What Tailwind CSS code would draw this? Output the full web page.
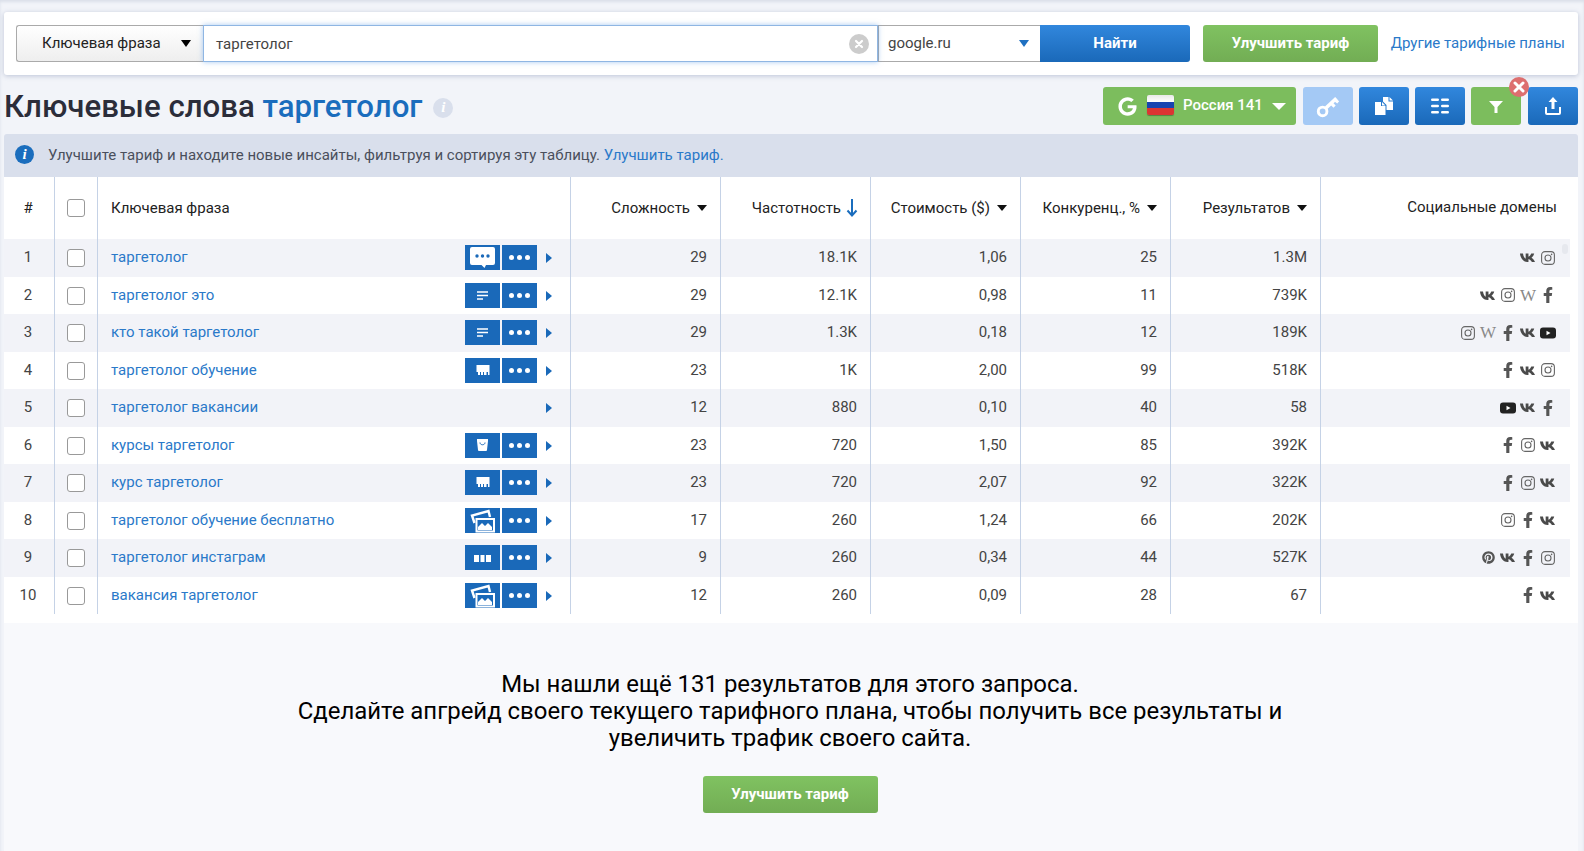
<!DOCTYPE html>
<html lang="ru">
<head>
<meta charset="utf-8">
<title>Ключевые слова</title>
<script src="https://cdn.jsdelivr.net/npm/@tailwindcss/browser@4"></script>
</head>
<body class="h-[851px] overflow-hidden bg-[#f2f4f9] shadow-[inset_0_2px_3px_rgba(90,105,150,0.15)] font-['Roboto',sans-serif] text-[15px] text-[#444]">

<!-- shared icons -->
<svg class="hidden">
  <symbol id="vk" viewBox="0 0 24 14"><path fill="#4a4a4a" d="M0 1h4.500c.5 4 2 6.800 4 7.800V1h4.200v5c2-.8 3.300-3 4.200-5h4.400c-.7 3-2.500 5-4 6.300 2 1.400 4.200 3.700 5.200 6.500h-4.700c-1-2.300-2.900-4-5.100-4.700v4.700h-1.700C6 13.800.5 8.500 0 1z"/></symbol>
  <symbol id="fb" viewBox="0 0 320 512"><path fill="#555" d="M279.140 288l14.220-92.660h-88.910v-60.130c0-25.350 12.420-50.060 52.240-50.060h40.420V6.260S260.430 0 225.360 0c-73.220 0-121.080 44.380-121.080 124.720v70.620H22.890V288h81.390v224h100.170V288z"/></symbol>
  <symbol id="ig" viewBox="0 0 14 14"><rect x=".6" y=".6" width="12.800" height="12.800" rx="3.400" fill="none" stroke="#666" stroke-width="1.100"/><circle cx="7" cy="7" r="3" fill="none" stroke="#666" stroke-width="1.100"/><circle cx="10.600" cy="3.400" r=".8" fill="#666"/></symbol>
  <symbol id="yt" viewBox="0 0 16 12"><rect width="16" height="11" y=".5" rx="3" fill="#222"/><path fill="#fff" d="M6.500 3.800l4 2.200-4 2.200z"/></symbol>
  <symbol id="pin" viewBox="0 0 496 512"><path fill="#555" d="M496 256c0 137-111 248-248 248-25.600 0-50.200-3.900-73.400-11.100 10.100-16.500 25.200-43.500 30.800-65 3-11.600 15.400-59 15.400-59 8.100 15.400 31.700 28.500 56.800 28.500 74.800 0 128.700-68.800 128.700-154.300 0-81.900-66.900-143.200-152.900-143.200-107 0-163.900 71.800-163.900 150.100 0 36.400 19.400 81.700 50.300 96.100 4.700 2.200 7.200 1.200 8.300-3.300.8-3.400 5-20.300 6.900-28.100.6-2.500.3-4.700-1.700-7.100-10.100-12.500-18.300-35.300-18.300-56.600 0-54.700 41.400-107.600 112-107.600 60.900 0 103.600 41.500 103.600 100.900 0 67.100-33.900 113.600-78 113.600-24.300 0-42.600-20.100-36.700-44.800 7-29.500 20.500-61.300 20.500-82.600 0-19-10.200-34.900-31.400-34.900-24.900 0-44.900 25.700-44.900 60.200 0 22 7.400 36.800 7.400 36.800s-24.500 103.800-29 123.200c-5 21.400-3 51.600-.9 71.200C65.400 450.900 0 361.100 0 256 0 119 111 8 248 8s248 111 248 248z"/></symbol>
</svg>

<div class="flex flex-col h-full pl-1 pr-[6px] pt-3">

  <!-- search bar -->
  <div class="flex items-center h-[63px] shrink-0 pl-3 pr-[13px] bg-white rounded-[3px] shadow-[0_1px_5px_rgba(90,105,150,0.35)]">
    <div class="flex items-center justify-between w-[187px] h-[37px] pl-[25px] pr-3 border border-[#aaa] border-r-0 rounded-l-[3px] bg-gradient-to-b from-white to-[#eee] text-[#222]">
      Ключевая фраза
      <span class="w-0 h-0 border-x-[5.500px] border-x-transparent border-t-[7px] border-t-black"></span>
    </div>
    <div class="flex items-center justify-between w-[675px] h-[37px] pl-3 pr-[8px] border border-[#8fb6e3] bg-white shadow-[0_0_5px_rgba(80,150,230,0.5)] text-[#444] relative">
      <span class="pt-[1px]">таргетолог</span>
      <span class="flex items-center justify-center w-5 h-5 rounded-full bg-[#ccc]">
        <svg viewBox="0 0 10 10" class="w-[10px] h-[10px]"><path d="M2 2l6 6M8 2l-6 6" stroke="#fff" stroke-width="2.200" stroke-linecap="round"/></svg>
      </span>
    </div>
    <div class="flex items-center justify-between w-[162px] h-[37px] pl-[9px] pr-[11px] border-y border-[#aaa] border-l border-l-[#aaa] bg-white text-[#444]">
      google.ru
      <span class="w-0 h-0 border-x-[5.500px] border-x-transparent border-t-[7px] border-t-[#1f70c1]"></span>
    </div>
    <div class="flex items-center justify-center w-[150px] h-[37px] rounded-r-[3px] bg-gradient-to-b from-[#3187dd] to-[#1a69b9] text-white font-bold">Найти</div>
    <div class="flex items-center justify-center w-[175px] h-[37px] ml-[13px] rounded-[3px] bg-gradient-to-b from-[#80c261] to-[#72ad54] text-white font-bold">Улучшить тариф</div>
    <a class="ml-auto text-[#2a79c9]">Другие тарифные планы</a>
  </div>

  <!-- title and tools -->
  <div class="flex items-center h-[38px] mt-3 shrink-0">
    <h1 class="pt-[1px] text-[31.200px] leading-[38px] font-medium text-[#2b2d3a]">Ключевые слова <span class="text-[#1a6dbd]">таргетолог</span></h1>
    <span class="flex items-center justify-center w-5 h-5 ml-[11px] mt-[3px] rounded-full bg-[#d9dfec] text-white text-[15px] font-bold italic font-['Liberation_Serif',serif]">i</span>

    <div class="flex items-center h-[38px] ml-auto w-[193px] pl-[15px] rounded-[3px] bg-[#7cbd5d] text-white font-medium">
      <svg viewBox="0 0 488 512" class="w-[19px] h-[19px] mr-[10px]"><path fill="#fff" d="M488 261.800C488 403.300 391.100 504 248 504 110.800 504 0 393.200 0 256S110.800 8 248 8c66.800 0 123 24.500 166.300 64.900l-67.500 64.900C258.500 52.600 94.300 116.600 94.300 256c0 86.500 69.100 156.600 153.700 156.600 98.200 0 135-70.400 140.800-106.900H248v-85.300h236.100c2.300 12.700 3.900 24.900 3.900 41.400z"/></svg>
      <span class="flex flex-col w-[27px] h-5 mb-[2px] rounded-[2px] overflow-hidden mr-[9px] shadow-[0_1px_1px_rgba(0,0,0,0.3)]">
        <span class="h-[7px] bg-gradient-to-b from-[#e9e9e9] to-white"></span>
        <span class="h-[6px] bg-[#1744b0]"></span>
        <span class="h-[7px] bg-[#dc3532]"></span>
      </span>
      <span class="pb-[2px]">Россия 141</span>
      <span class="ml-[9px] w-0 h-0 border-x-[7px] border-x-transparent border-t-[7px] border-t-white"></span>
    </div>

    <div class="flex items-center justify-center w-[50px] h-[38px] ml-[7px] rounded-[3px] bg-[#a4c9f5]">
      <svg viewBox="0 0 20 20" class="w-[24px] h-[24px]"><circle cx="5.500" cy="14.500" r="3.600" fill="none" stroke="#fff" stroke-width="2.400"/><path d="M8.500 11.500L17 3.500" stroke="#fff" stroke-width="3"/><path d="M13 8l2.500 2.500M16 5l2.500 2" stroke="#fff" stroke-width="2.600"/></svg>
    </div>
    <div class="flex items-center justify-center w-[50px] h-[38px] ml-[6px] rounded-[3px] bg-gradient-to-b from-[#3187dd] to-[#1a69b9]">
      <svg viewBox="0 0 20 20" class="w-5 h-5"><path fill="#fff" d="M1 6h6v4h4.500v9H1zM8 6l3.500 3.500H8z"/><path fill="#fff" d="M9 1h5.500v4.500H19V14h-6.500V9L9 5.500zM15.500 1L19 4.500h-3.500z"/></svg>
    </div>
    <div class="flex items-center justify-center w-[50px] h-[38px] ml-[6px] rounded-[3px] bg-gradient-to-b from-[#3187dd] to-[#1a69b9]">
      <svg viewBox="0 0 18 16" class="w-[18px] h-4"><path stroke="#fff" stroke-width="2.400" stroke-linecap="round" d="M1.200 1.800h5.600M11.200 1.800h5.600M1.200 8h5.600M11.200 8h5.600M1.200 14.200h5.600M11.200 14.200h5.600"/></svg>
    </div>
    <div class="relative flex items-center justify-center w-[50px] h-[38px] ml-[6px] rounded-[3px] bg-[#7cbd5d]">
      <svg viewBox="0 0 14 12" class="w-[14px] h-3 mt-[1px]"><path fill="#fff" d="M0 0h14L8.500 6v6h-3V6z"/></svg>
      <span class="absolute -top-[10px] right-[-8px] flex items-center justify-center w-5 h-5 rounded-full bg-[#dd6f6f]">
        <svg viewBox="0 0 12 12" class="w-3 h-3"><path d="M2 2l8 8M10 2l-8 8" stroke="#fff" stroke-width="3" stroke-linecap="round"/></svg>
      </span>
    </div>
    <div class="flex items-center justify-center w-[50px] h-[38px] ml-[7px] rounded-[3px] bg-gradient-to-b from-[#3187dd] to-[#1a69b9]">
      <svg viewBox="0 0 16 18" class="w-4 h-[18px]"><path fill="#fff" d="M8 0l4.500 5H9.500v7h-3V5H3.500z"/><path fill="none" stroke="#fff" stroke-width="2" d="M1 10v6a1 1 0 0 0 1 1h12a1 1 0 0 0 1-1v-6"/></svg>
    </div>
  </div>

  <!-- notice -->
  <div class="flex items-center h-[43px] mt-[9px] shrink-0 pl-[11px] rounded-t-[3px] bg-[#d9dfec] text-[#4a4f5c]">
    <span class="flex items-center justify-center w-[19px] h-[19px] mb-[2px] mr-[14px] rounded-full bg-[#1a6dbd] text-white text-[15px] font-bold italic font-['Liberation_Serif',serif]">i</span>
    <span>Улучшите тариф и находите новые инсайты, фильтруя и сортируя эту таблицу. <a class="text-[#2a79c9]">Улучшить тариф.</a></span>
  </div>

  <!-- table -->
  <div class="relative shrink-0 pb-[9px] bg-white">
    <div class="w-[1566px]">
      <div class="grid grid-cols-[51px_43px_473px_150px_150px_150px_150px_150px_249px] h-[62px] text-[#222]">
        <div class="flex items-center justify-center pr-[2px] border-r border-[#c5d2e6]">#</div>
        <div class="flex items-center justify-center border-r border-[#c5d2e6]">
          <span class="w-[18px] h-[18px] rounded-[3px] border border-[#999] bg-white"></span>
        </div>
        <div class="flex items-center pl-[13px] border-r border-[#c5d2e6]">Ключевая фраза</div>
        <div class="flex items-center justify-end gap-[7px] pr-[13px] border-r border-[#c5d2e6]">Сложность <span class="w-0 h-0 border-x-[5px] border-x-transparent border-t-[6px] border-t-[#111]"></span></div>
        <div class="flex items-center justify-end gap-[5px] pr-[12px] border-r border-[#c5d2e6]">Частотность
          <svg viewBox="0 0 12 18" class="w-3 h-[18px]"><path d="M6 0v16M1.500 11.500L6 16.500l4.500-5" fill="none" stroke="#1a6dbd" stroke-width="2"/></svg>
        </div>
        <div class="flex items-center justify-end gap-[7px] pr-[13px] border-r border-[#c5d2e6]">Стоимость ($) <span class="w-0 h-0 border-x-[5px] border-x-transparent border-t-[6px] border-t-[#111]"></span></div>
        <div class="flex items-center justify-end gap-[7px] pr-[13px] border-r border-[#c5d2e6]">Конкуренц., % <span class="w-0 h-0 border-x-[5px] border-x-transparent border-t-[6px] border-t-[#111]"></span></div>
        <div class="flex items-center justify-end gap-[7px] pr-[13px] border-r border-[#c5d2e6]">Результатов <span class="w-0 h-0 border-x-[5px] border-x-transparent border-t-[6px] border-t-[#111]"></span></div>
        <div class="flex items-center justify-end pr-[13px] pb-[2px]">Социальные домены</div>
      </div>
      <div id="rows"></div>
    </div>
    <span class="absolute right-[10px] top-[67px] w-[6px] h-[10px] rounded-[3px] bg-[#e6e8ee]"></span>
  </div>

  <!-- upgrade block -->
  <div class="flex flex-col items-center flex-1 pt-[48px] pr-[2px] bg-[#f8f9fc]">
    <p class="w-[1000px] text-center text-[23.950px] leading-[27px] text-black">Мы нашли ещё 131 результатов для этого запроса.<br>Сделайте апгрейд своего текущего тарифного плана, чтобы получить все результаты и увеличить трафик своего сайта.</p>
    <div class="flex items-center justify-center w-[175px] h-[37px] mt-[24px] rounded-[3px] bg-gradient-to-b from-[#80c261] to-[#72ad54] text-white font-bold">Улучшить тариф</div>
  </div>
</div>

<script>
const rows = [
  ['таргетолог', 'chat', '29', '18.1K', '1,06', '25', '1.3M', ['vk', 'ig']],
  ['таргетолог это', 'list', '29', '12.1K', '0,98', '11', '739K', ['vk', 'ig', 'w', 'fb']],
  ['кто такой таргетолог', 'list', '29', '1.3K', '0,18', '12', '189K', ['ig', 'w', 'fb', 'vk', 'yt']],
  ['таргетолог обучение', 'shop', '23', '1K', '2,00', '99', '518K', ['fb', 'vk', 'ig']],
  ['таргетолог вакансии', '', '12', '880', '0,10', '40', '58', ['yt', 'vk', 'fb']],
  ['курсы таргетолог', 'bag', '23', '720', '1,50', '85', '392K', ['fb', 'ig', 'vk']],
  ['курс таргетолог', 'shop', '23', '720', '2,07', '92', '322K', ['fb', 'ig', 'vk']],
  ['таргетолог обучение бесплатно', 'img', '17', '260', '1,24', '66', '202K', ['ig', 'fb', 'vk']],
  ['таргетолог инстаграм', 'cols', '9', '260', '0,34', '44', '527K', ['pin', 'vk', 'fb', 'ig']],
  ['вакансия таргетолог', 'img', '12', '260', '0,09', '28', '67', ['fb', 'vk']]
];

const featureIcons = {
  chat: '<svg viewBox="0 0 35 25" class="w-[35px] h-[25px]"><path fill="#fff" d="M7 2h21a2 2 0 0 1 2 2v14a2 2 0 0 1-2 2h-7l-1.500 3-3-3H7a2 2 0 0 1-2-2V4a2 2 0 0 1 2-2z"/><circle cx="12" cy="11" r="1.700" fill="#1a69b9"/><circle cx="17.500" cy="11" r="1.700" fill="#1a69b9"/><circle cx="23" cy="11" r="1.700" fill="#1a69b9"/></svg>',
  list: '<svg viewBox="0 0 35 25" class="w-[35px] h-[25px]"><path stroke="#fff" stroke-width="1.500" d="M12 9h11M12 12.500h11M12 16h6"/></svg>',
  shop: '<svg viewBox="0 0 35 25" class="w-[35px] h-[25px]"><path fill="#fff" d="M11.500 7h13v10h-1.500v-3h-1.500v3H19v-3h-1v3h-2v-3h-1v3h-2v-3h-1.500z"/></svg>',
  bag: '<svg viewBox="0 0 35 25" class="w-[35px] h-[25px]"><path fill="#fff" d="M12 6h11v2l-1 9a1 1 0 0 1-1 1h-7a1 1 0 0 1-1-1l-1-9z"/><path fill="none" stroke="#1a69b9" d="M15 9.500c0 3 5 3 5 0"/></svg>',
  img: '<svg viewBox="0 0 35 25" class="w-[35px] h-[25px]"><path fill="none" stroke="#fff" stroke-width="2.400" d="M9.500 15L7 7.500 23.500 3 25 9"/><rect x="11.500" y="11" width="17.500" height="12.500" fill="#1a69b9" stroke="#fff" stroke-width="2"/><path fill="#fff" d="M13 22v-3l4-4 3 3 3-3 4 4v3z"/></svg>',
  cols: '<svg viewBox="0 0 35 25" class="w-[35px] h-[25px]"><path fill="#fff" d="M9 10h5v7H9zM15.500 10h4v7h-4zM21 10h5v7h-5z"/></svg>'
};

function social(name) {
  if (name === 'w') return '<span class="flex items-center justify-center w-5 text-[17px] text-[#888] font-[\'Liberation_Serif\',serif]">W</span>';
  const size = { vk: 'w-[16px] h-[11px]', fb: 'w-[10px] h-[16px]', ig: 'w-[14px] h-[14px]', yt: 'w-[16px] h-[12px]', pin: 'w-[13px] h-[13px]' }[name];
  return `<span class="flex items-center justify-center w-5"><svg class="${size}"><use href="#${name}"/></svg></span>`;
}

const numCell = 'flex items-center justify-end pr-[13px] pb-[1px] border-r border-[#c5d2e6]';
document.getElementById('rows').innerHTML = rows.map((r, i) => `
  <div class="grid grid-cols-[51px_43px_473px_150px_150px_150px_150px_150px_249px] h-[37.500px] ${i % 2 ? 'bg-white' : 'bg-[#f2f3f8]'}">
    <div class="flex items-center justify-center pb-[1px] pr-[2px] border-r border-[#c5d2e6]">${i + 1}</div>
    <div class="flex items-center justify-center pt-[1px] border-r border-[#c5d2e6]">
      <span class="w-[18px] h-[18px] rounded-[3px] border border-[#999] bg-white"></span>
    </div>
    <div class="flex items-center pl-[13px] pr-[18px] border-r border-[#c5d2e6]">
      <a class="mr-auto pb-[1px] text-[#2a79c9]">${r[0]}</a>
      ${r[1] ? `<span class="w-[35px] h-[25px] bg-[#1a69b9]">${featureIcons[r[1]]}</span>
      <span class="flex items-center justify-center gap-[3px] w-[35px] h-[25px] ml-[2px] bg-[#1a69b9]">
        <i class="w-[5px] h-[5px] rounded-full bg-white"></i><i class="w-[5px] h-[5px] rounded-full bg-white"></i><i class="w-[5px] h-[5px] rounded-full bg-white"></i>
      </span>` : ''}
      <span class="ml-[9px] mt-[1px] w-0 h-0 border-y-[5px] border-y-transparent border-l-[6px] border-l-[#1a69b9]"></span>
    </div>
    <div class="${numCell}">${r[2]}</div>
    <div class="${numCell}">${r[3]}</div>
    <div class="${numCell}">${r[4]}</div>
    <div class="${numCell}">${r[5]}</div>
    <div class="${numCell}">${r[6]}</div>
    <div class="flex items-center justify-end pr-[12px]">${r[7].map(social).join('')}</div>
  </div>`).join('');
</script>
</body>
</html>
